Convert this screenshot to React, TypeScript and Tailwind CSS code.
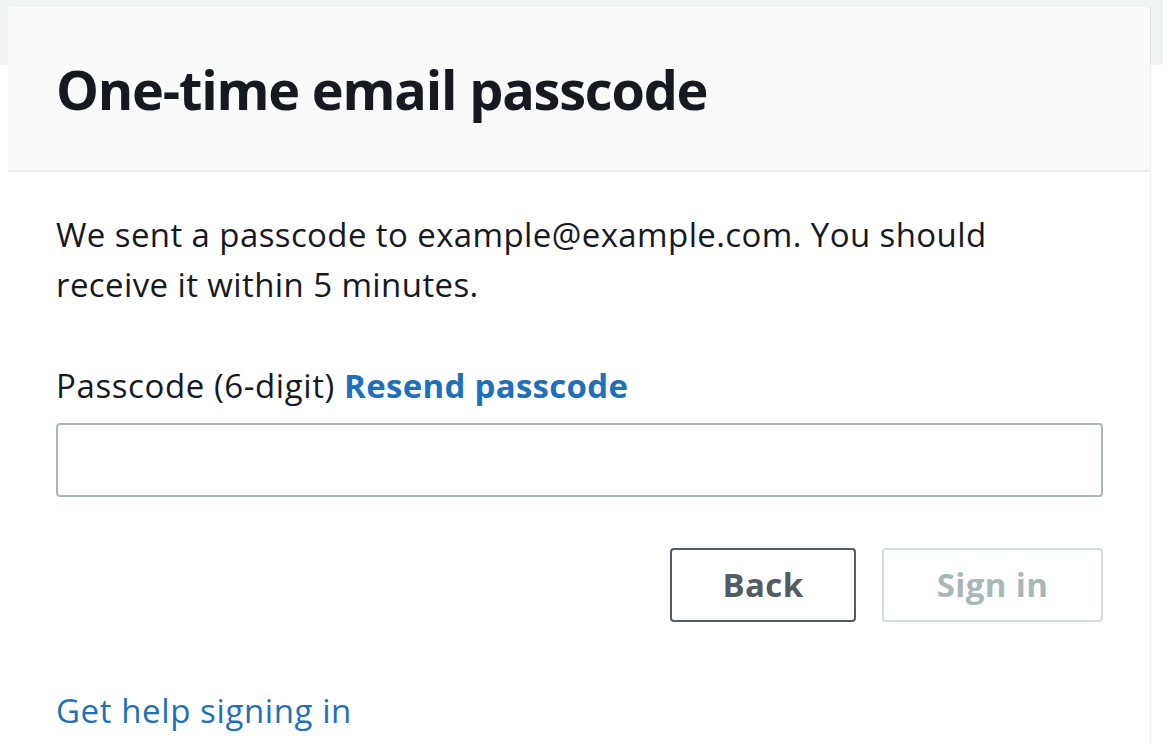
export default function App() {
  return (
    <main
      className="min-h-screen bg-[linear-gradient(#f2f3f3_65px,#ffffff_65px)] pt-[7px] pl-[8px] pr-[13px] text-[#16191f]"
      style={{ fontFamily: '"Open Sans", "Noto Sans", Arial, sans-serif' }}
    >
      <section className="min-h-[738px] bg-white shadow-[1px_0_1px_rgba(0,0,0,0.06)]">
        <header className="flex h-[165px] items-center border-b-2 border-[#eaeded] bg-[#fafafa] px-[48px]">
          <h1 className="text-[54px] font-bold leading-none tracking-[-1.2px]">One-time email passcode</h1>
        </header>
        <div className="pl-[48px] pr-[47px] pt-[38px] tracking-[0.4px]">
          <p className="text-[33px] leading-[50px]">
            We sent a passcode to example@example.com. You should
            <br />
            receive it within 5 minutes.
          </p>
          <label className="mt-[56px] block text-[33px] leading-[40px] tracking-[0.6px]">
            Passcode (6-digit){" "}
            <a href="#" className="font-bold tracking-[0.3px] text-[#1e70b8]">
              Resend passcode
            </a>
          </label>
          <input
            type="text"
            className="mt-[17px] block h-[74px] w-full rounded-[4px] border-2 border-[#aab7b8] px-4 text-[33px] outline-none"
          />
          <div className="mt-[51px] flex justify-end gap-[26px]">
            <button className="h-[74px] w-[186px] rounded-[4px] border-2 border-[#545b64] text-[33px] font-bold text-[#545b64]">
              Back
            </button>
            <button
              disabled
              className="h-[74px] w-[221px] rounded-[4px] border-2 border-[#d5dbdb] text-[33px] font-bold text-[#aab7b8]"
            >
              Sign in
            </button>
          </div>
          <a href="#" className="mt-[69px] block text-[33px] leading-[40px] tracking-[0.6px] text-[#1e70b8]">
            Get help signing in
          </a>
        </div>
      </section>
    </main>
  );
}
